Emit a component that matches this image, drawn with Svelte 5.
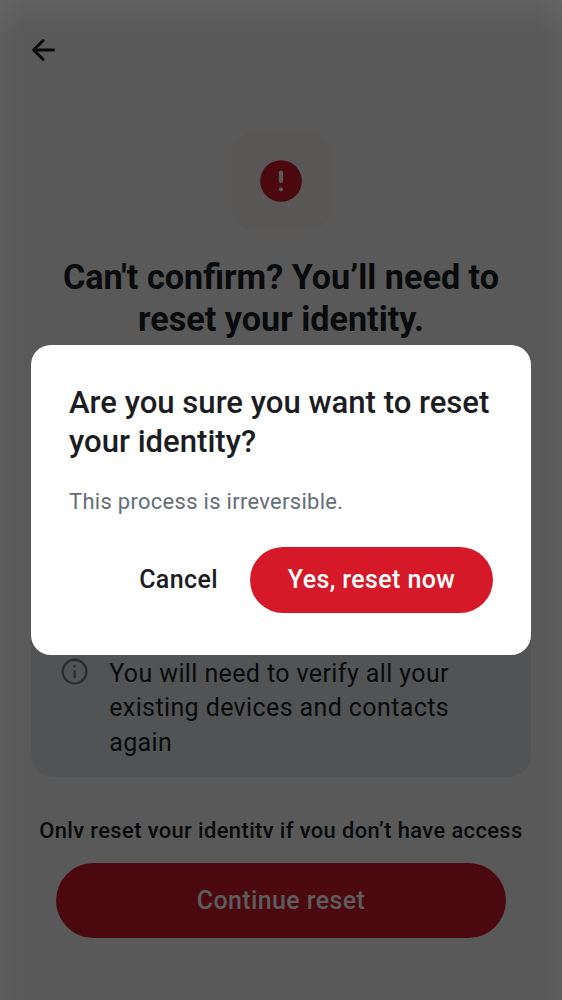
<script lang="ts">
  const heading = ["Can't confirm? You’ll need to", 'reset your identity.'];
  const notice = ['You will need to verify all your', 'existing devices and contacts', 'again'];
  const question = ['Are you sure you want to reset', 'your identity?'];
</script>

<div class="screen">
  <main class="page" inert>
    <header>
      <svg class="back" width="38" height="38" viewBox="0 0 38 38" fill="none" stroke="currentColor" stroke-width="2.9" stroke-linecap="round" stroke-linejoin="round" aria-hidden="true">
        <path d="M18.1 9.6 8.6 19l9.5 9.4M8.8 19h19.8" />
      </svg>
    </header>
    <section class="content">
      <div class="tile">
        <svg width="50" height="50" viewBox="0 0 24 24" aria-hidden="true">
          <circle cx="12" cy="12" r="10" fill="#4b090f" />
          <rect x="11" y="7" width="2" height="6" rx="1" fill="#5a5a5a" />
          <circle cx="12" cy="16" r="1" fill="#5a5a5a" />
        </svg>
      </div>
      <h1>{#each heading as line}<span>{line}</span>{/each}</h1>
      <div class="notice">
        <svg width="31.2" height="31.2" viewBox="0 0 24 24" aria-hidden="true">
          <circle cx="12" cy="12" r="9.1" fill="none" stroke="#2b2c2e" stroke-width="1.8" />
          <rect x="11.1" y="11" width="1.8" height="6" rx=".9" fill="#2b2c2e" />
          <circle cx="12" cy="8" r="1" fill="#2b2c2e" />
        </svg>
        <p>{#each notice as line}<span>{line}</span>{/each}</p>
      </div>
      <p class="advice">Only reset your identity if you don’t have access</p>
    </section>
    <footer><button class="continue">Continue reset</button></footer>
  </main>

  <div class="overlay">
    <div class="dialog" role="alertdialog" aria-modal="true" aria-labelledby="question">
      <h2 id="question">{#each question as line}<span>{line}</span>{/each}</h2>
      <p class="detail">This process is irreversible.</p>
      <div class="actions">
        <button class="cancel">Cancel</button>
        <button class="confirm">Yes, reset now</button>
      </div>
    </div>
  </div>
</div>

<style>
  :global(body) { margin: 0; }
  .screen {
    position: relative;
    width: 562px;
    height: 1000px;
    overflow: hidden;
    font-family: Roboto, sans-serif;
    background:
      linear-gradient(to bottom, rgb(255 255 255 / 4%), transparent 36px),
      linear-gradient(to right, rgb(255 255 255 / 3%), transparent 26px),
      linear-gradient(to left, rgb(255 255 255 / 3%), transparent 26px),
      #595959;
  }
  h1, h2, p { margin: 0; }
  h1 span, h2 span, p span { display: block; white-space: nowrap; }
  button { border: 0; padding: 0; font: inherit; }
  .page {
    height: 1000px;
    display: flex;
    flex-direction: column;
    color: #090a0b;
  }
  header { height: 100px; flex: none; }
  .back { display: block; margin: 31px 0 0 25px; }
  .content {
    height: 737.5px;
    flex: none;
    overflow: hidden;
    display: flex;
    flex-direction: column;
    align-items: center;
  }
  .tile {
    width: 99px;
    height: 100px;
    flex: none;
    margin-top: 31px;
    border-radius: 24px;
    display: grid;
    place-items: center;
    background: #595755;
  }
  h1 {
    margin-top: 25px;
    text-align: center;
    font-size: 34.2px;
    font-weight: 700;
    line-height: 42.3px;
  }
  .notice {
    box-sizing: border-box;
    width: 500px;
    height: 257.5px;
    flex: none;
    margin-top: 179.4px;
    padding: 0 28px 17.5px;
    display: flex;
    align-items: flex-end;
    gap: 19px;
    border-radius: 22px;
    background: #525355;
  }
  .notice svg { flex: none; margin-bottom: 72.6px; }
  .notice p { font-size: 25px; line-height: 34.4px; letter-spacing: 0.39px; }
  .advice {
    margin-top: 38px;
    white-space: nowrap;
    font-size: 21.9px;
    font-weight: 500;
    line-height: 31px;
    letter-spacing: 0.4px;
  }
  footer { flex: none; padding: 25px 56px 0; }
  .continue {
    display: block;
    width: 450px;
    height: 75px;
    border-radius: 38px;
    background: #4b090f;
    color: #5d5d5d;
    font-size: 25px;
    font-weight: 500;
    line-height: 75px;
    letter-spacing: 0.39px;
  }
  .overlay { position: absolute; inset: 0; display: grid; place-items: center; }
  .dialog {
    box-sizing: border-box;
    width: 500px;
    height: 310px;
    padding: 37.5px 38px;
    border-radius: 20px;
    background: #fff;
    color: #1b1d22;
  }
  h2 { font-size: 31.1px; font-weight: 500; line-height: 39px; }
  .detail {
    margin-top: 25px;
    font-size: 21.9px;
    line-height: 31px;
    letter-spacing: 0.33px;
    color: #656d77;
  }
  .actions {
    display: flex;
    justify-content: flex-end;
    align-items: center;
    gap: 32px;
    margin-top: 30.5px;
    font-size: 25px;
    font-weight: 500;
  }
  .actions button { letter-spacing: 0.39px; }
  .cancel { background: none; color: #1b1d22; }
  .confirm {
    width: 243px;
    height: 65.5px;
    border-radius: 33px;
    background: #d51928;
    color: #fff;
  }
</style>
